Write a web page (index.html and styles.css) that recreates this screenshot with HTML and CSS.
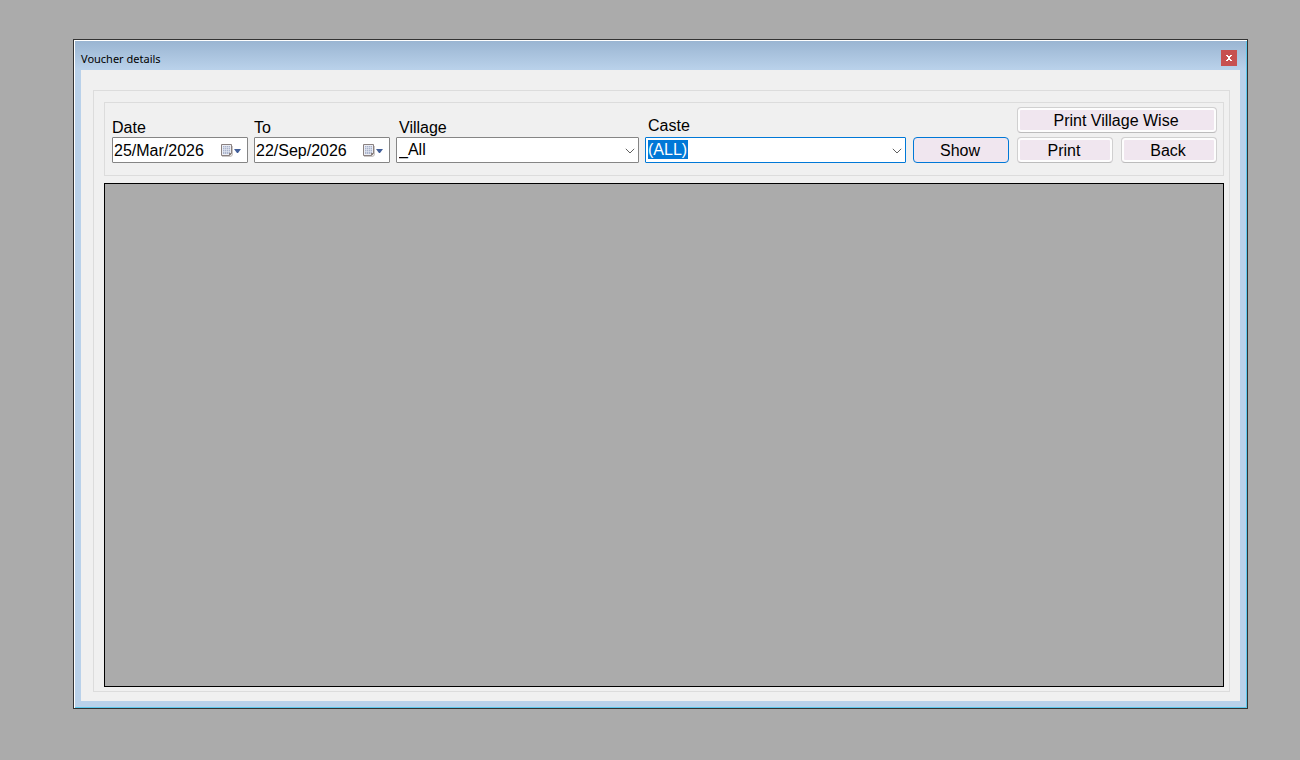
FILE: index.html
```html
<!DOCTYPE html>
<html lang="en">
<head>
<meta charset="utf-8">
<title>Voucher details</title>
<link rel="stylesheet" href="styles.css">
</head>
<body>
<main class="window">
  <header class="titlebar">
    <h1 class="title">Voucher details</h1>
    <button class="close" type="button" aria-label="Close">
      <svg width="6" height="6" viewBox="0 0 6 6" shape-rendering="crispEdges"><path fill="#fff" d="M0 0h2v1h2V0h2v1H5v1H4v2h1v1h1v1H4V5H2v1H0V5h1V4h1V2H1V1H0z"/></svg>
    </button>
  </header>
  <div class="client">
    <div class="frame">
      <form class="filters">
        <div class="field date-field">
          <label for="from">Date</label>
          <div class="control">
            <input class="box" id="from" type="text" value="25/Mar/2026">
            <svg class="calendar" width="22" height="14" viewBox="0 0 22 14"><path fill="#cbc7c6" d="M2 12h8l2-2V2h1v9l-2 2H2z"/><path fill="#eceef5" stroke="#8a8180" d="M1.500.5h10v9l-2 2h-8z"/><path fill="#aab4cc" d="M3 2h7v8H3z"/><path stroke="#e6eaf3" fill="none" d="M3 3.500h7M3 5.500h7M3 7.500h7M4.500 2v8M6.500 2v8M8.500 2v8" stroke-opacity=".6"/><path fill="#8a8180" d="M9 9h3l-3 3z"/><path fill="#415e99" d="M14 5h7l-3 4h-1z"/></svg>
          </div>
        </div>
        <div class="field date-field">
          <label for="to">To</label>
          <div class="control">
            <input class="box" id="to" type="text" value="22/Sep/2026">
            <svg class="calendar" width="22" height="14" viewBox="0 0 22 14"><path fill="#cbc7c6" d="M2 12h8l2-2V2h1v9l-2 2H2z"/><path fill="#eceef5" stroke="#8a8180" d="M1.500.5h10v9l-2 2h-8z"/><path fill="#aab4cc" d="M3 2h7v8H3z"/><path stroke="#e6eaf3" fill="none" d="M3 3.500h7M3 5.500h7M3 7.500h7M4.500 2v8M6.500 2v8M8.500 2v8" stroke-opacity=".6"/><path fill="#8a8180" d="M9 9h3l-3 3z"/><path fill="#415e99" d="M14 5h7l-3 4h-1z"/></svg>
          </div>
        </div>
        <div class="field combo village">
          <label for="village">Village</label>
          <div class="control">
            <select class="box" id="village"><option>_All</option></select>
            <svg class="arrow" width="10" height="6" viewBox="0 0 10 6"><path fill="none" stroke="#606060" d="M.8.8 5 5 9.200.8"/></svg>
          </div>
        </div>
        <div class="field combo caste">
          <label for="caste">Caste</label>
          <div class="control">
            <select class="box highlighted" id="caste"><option>(ALL)</option></select>
            <svg class="arrow" width="10" height="6" viewBox="0 0 10 6"><path fill="none" stroke="#606060" d="M.8.8 5 5 9.200.8"/></svg>
          </div>
        </div>
        <button class="btn default" type="button">Show</button>
        <div class="actions">
          <button class="btn wide" type="button">Print Village Wise</button>
          <button class="btn" type="button">Print</button>
          <button class="btn" type="button">Back</button>
        </div>
      </form>
      <section class="grid" aria-label="Vouchers"></section>
    </div>
  </div>
</main>
</body>
</html>
```
FILE: styles.css
```css
* {
  box-sizing: border-box;
}

body {
  margin: 0;
  min-height: 100vh;
  padding: 39px 52px 51px 73px;
  display: flex;
  background: #ababab;
  color: #000;
  font: 16px/18px "Liberation Sans", Arial, sans-serif;
}

button,
input,
select {
  font: inherit;
  color: inherit;
}

.window {
  flex: 1;
  display: flex;
  flex-direction: column;
  padding: 1px 7px 7px;
  border: 1px solid #333;
  background: linear-gradient(#99b4d1, #b9d1ea 29px);
  box-shadow: inset 1px 1px #fff, inset -1px -1px #5cc8ec;
}

.titlebar {
  height: 29px;
  display: flex;
  align-items: center;
  justify-content: space-between;
  padding: 4px 3px 0 0;
}

.title {
  margin: 0;
  padding-top: 2px;
  font: 11px/16px "Noto Sans", sans-serif;
}

.close {
  width: 16px;
  height: 16px;
  padding: 0;
  border: 0;
  display: grid;
  place-items: center;
  background: #c75050;
}

.client {
  flex: 1;
  display: flex;
  padding: 20px 10px 9px 12px;
  background: #f0f0f0;
}

.frame {
  flex: 1;
  display: flex;
  flex-direction: column;
  gap: 7px;
  padding: 11px 5px 4px 10px;
  border: 1px solid #dcdcdc;
}

.filters {
  display: flex;
  align-items: flex-end;
  gap: 6px;
  padding: 4px 6px 12px 7px;
  border: 1px solid #dcdcdc;
}

.field {
  display: flex;
  flex-direction: column;
}

.date-field {
  width: 136px;
}

.village {
  flex: 243;
}

.caste {
  flex: 261;
  gap: 2px;
}

.combo label {
  padding-left: 3px;
}

.control {
  position: relative;
}

.box {
  display: block;
  width: 100%;
  height: 26px;
  margin: 0;
  padding: 2px 1px 0;
  border: 1px solid #858585;
  border-radius: 1px;
  background: #fff;
  appearance: none;
  outline: 0;
}

.combo .box {
  padding: 0 2px;
}

.box.highlighted {
  border-color: #0078d7;
  color: #fff;
  background: linear-gradient(#0078d7, #0078d7) 2px 2px / 40px 19px no-repeat #fff;
}

.highlighted option {
  color: #000;
}

.calendar {
  position: absolute;
  right: 6px;
  top: 7px;
  pointer-events: none;
}

.arrow {
  position: absolute;
  right: 4px;
  top: 11px;
  pointer-events: none;
}

.btn {
  min-width: 96px;
  height: 26px;
  padding: 2px 2px 0 0;
  border: 1px solid #d0d0d0;
  border-bottom-color: #bcbcbc;
  border-radius: 4px;
  background: #f0e6ef;
  box-shadow: inset 0 0 0 2px #fdfdfd;
}

.btn.default {
  margin: 0 2px 0 1px;
  border-color: #0078d7;
  box-shadow: none;
}

.actions {
  display: grid;
  grid-template-columns: 96px 96px;
  gap: 4px 8px;
}

.wide {
  grid-column: span 2;
}

.grid {
  flex: 1;
  border: 1px solid #000;
  background: #ababab;
}
```
